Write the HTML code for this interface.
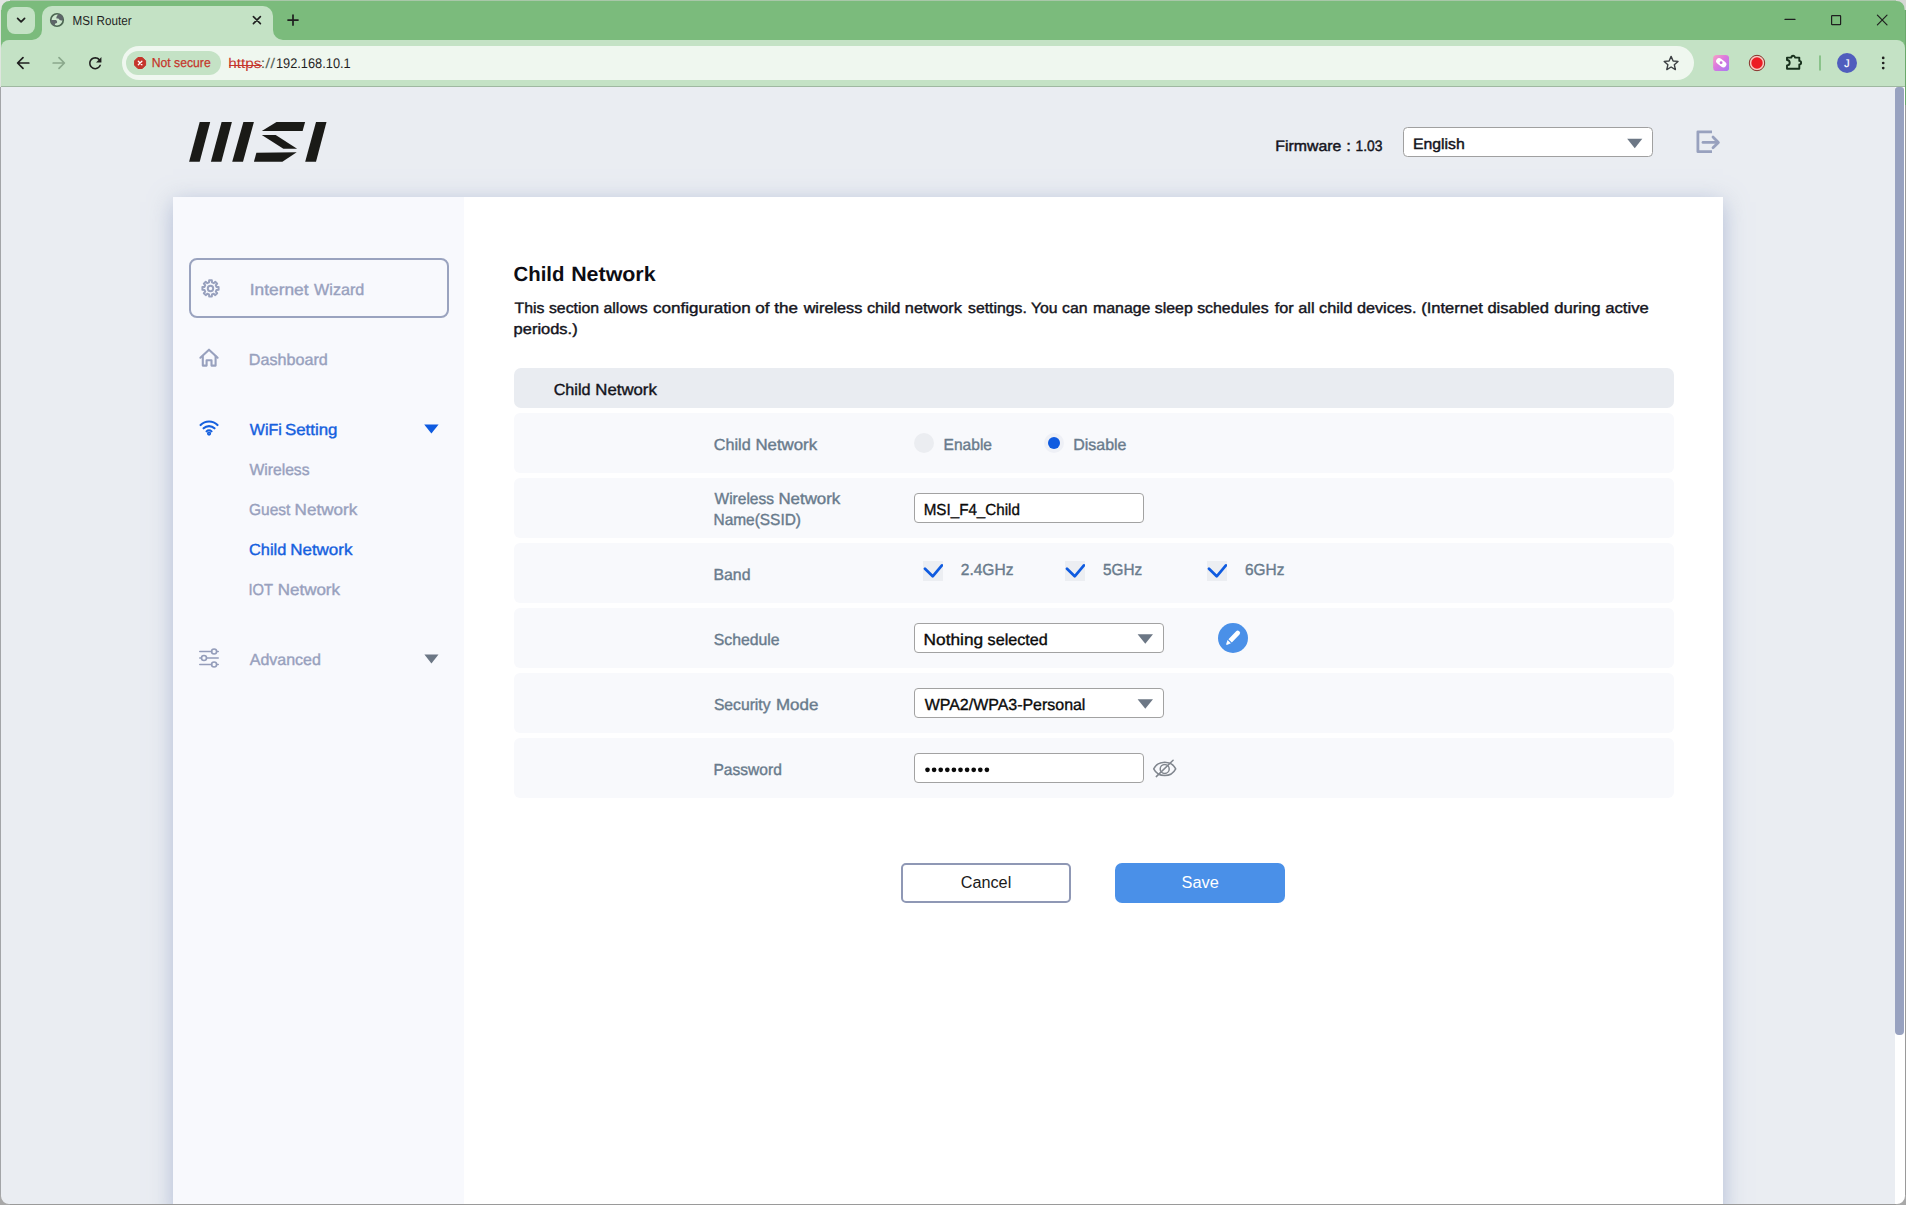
<!DOCTYPE html>
<html>
<head>
<meta charset="utf-8">
<title>MSI Router</title>
<style>
*{box-sizing:border-box;margin:0;padding:0}
html,body{width:1906px;height:1205px;overflow:hidden;background:#7bbb7c}
body{font-family:"Liberation Sans",sans-serif;position:relative;color:#111}
.abs{position:absolute}
.t{position:absolute;white-space:nowrap;line-height:1;transform-origin:0 50%;text-rendering:geometricPrecision}
/* ---------- browser chrome ---------- */
#tabstrip{left:0;top:0;width:1906px;height:40px;background:#7bbb7c}
#toolbar{left:1px;top:40px;width:1904px;height:46.3px;background:#c4e2c5;border-radius:8px 8px 0 0}
#tbline{left:1px;top:86.2px;width:1904px;height:1px;background:#9fb8a1}
#tab{left:42px;top:6px;width:231px;height:34px;background:#c4e2c5;border-radius:10px 10px 0 0}
#tabsearch{left:7px;top:6.5px;width:28px;height:27.5px;background:#c4e2c5;border-radius:8px}
#omni{left:122px;top:46px;width:1572px;height:34px;background:#eff7ef;border-radius:17px}
#chip{left:126px;top:51.2px;width:94.6px;height:23.8px;background:#c4e2c5;border-radius:12px}
/* ---------- page ---------- */
#page{left:1px;top:87px;width:1894px;height:1117px;background:#eaedf2;overflow:hidden}
#card{left:173px;top:197px;width:1550px;height:1020px;background:#fff;box-shadow:0 5px 22px 0 rgba(150,165,200,.68)}
#side{left:173px;top:197px;width:291px;height:1020px;background:#f8f9fd}
.nav{color:#969fbd}
.blue{color:#1759d6}
.lab{color:#6d7785}
.hdr{left:514px;top:368px;width:1160px;height:40px;background:#e9ecf1;border-radius:7px}
.row{left:514px;width:1160px;height:60px;background:#f8f9fc;border-radius:6px}
.inp{background:#fff;border:1px solid #a2a2a2;border-radius:4px}
</style>
</head>
<body>
<!-- BROWSER CHROME -->
<div class="abs" id="tabstrip"></div>
<div class="abs" id="toolbar"></div>
<div class="abs" id="tbline"></div>
<div class="abs" id="tab"></div>
<div class="abs" id="tabsearch"></div>
<div class="abs" id="omni"></div>
<div class="abs" id="chip"></div>
<!-- CHROME-ICONS -->
<!-- tab bottom curves -->
<svg class="abs" style="left:32px;top:30px" width="10" height="10" viewBox="0 0 10 10"><path d="M10 0 V10 H0 A10 10 0 0 0 10 0 Z" fill="#c4e2c5"/></svg>
<svg class="abs" style="left:273px;top:30px" width="10" height="10" viewBox="0 0 10 10"><path d="M0 0 V10 H10 A10 10 0 0 1 0 0 Z" fill="#c4e2c5"/></svg>
<svg class="abs" style="left:0;top:0" width="320" height="90" viewBox="0 0 320 90" fill="none" stroke="#1f1f1f" stroke-linecap="round" stroke-linejoin="round">
<path d="M17.6 18.4 L21.1 21.9 L24.6 18.4" stroke-width="1.7"/>
<path d="M253.4 16.6 L260.4 23.6 M260.4 16.6 L253.4 23.6" stroke-width="1.6"/>
<path d="M288 20.1 H298 M293 15.1 V25.1" stroke-width="1.7"/>
<path d="M28.8 63 H18 M23 57.6 L17.6 63 L23 68.4" stroke-width="1.7"/>
<path d="M53.2 63 H64 M59 57.6 L64.4 63 L59 68.4" stroke-width="1.7" stroke="#8aa88c"/>
</svg>
<svg class="abs" style="left:85.9px;top:53.8px" width="18.5" height="18.5" viewBox="0 0 24 24"><path fill="#1f1f1f" d="M17.65 6.35C16.2 4.9 14.21 4 12 4c-4.42 0-7.99 3.58-7.99 8s3.57 8 7.99 8c3.73 0 6.84-2.55 7.73-6h-2.08c-.82 2.33-3.04 4-5.65 4-3.31 0-6-2.69-6-6s2.69-6 6-6c1.66 0 3.14.69 4.22 1.78L13 11h7V4l-2.35 2.35z"/></svg>
<!-- globe favicon -->
<svg class="abs" style="left:49px;top:12px" width="16" height="16" viewBox="0 0 16 16"><circle cx="8" cy="8" r="6.25" fill="#cbe6cc" stroke="#4b6651" stroke-width="1.7"/><path d="M7.3 5.9 C7.5 4.4 8.5 3.3 9.4 2.3 C12.6 1.6 14.9 4.6 14.3 8.1 C13.4 8.7 11.2 8.5 10.4 7.7 C10 6.9 9.4 6.4 8.6 6.5 C8 6.6 7.4 6.5 7.3 5.9 Z" fill="#5d6568"/><path d="M1.6 8.3 C3 7.8 5.6 7.8 6.9 8.1 C7.8 8.6 8.3 9.6 8.1 10.4 C7.8 11.2 6.4 11 6 11.8 C5.8 12.4 6 13.1 5.5 13.9 C2.8 13 1.3 10.5 1.6 8.3 Z" fill="#5d6568"/></svg>
<!-- not secure icon -->
<svg class="abs" style="left:133px;top:56px" width="14" height="14" viewBox="0 0 14 14"><path d="M4.9 1.5 H9.3 L12.6 4.8 V9.2 L9.3 12.5 H4.9 L1.6 9.2 V4.8 Z" fill="#c5352b" stroke="#c5352b" stroke-width="1" stroke-linejoin="round"/><path d="M5.3 5.2 L8.9 8.8 M8.9 5.2 L5.3 8.8" stroke="#fff" stroke-width="1.25" stroke-linecap="round"/></svg>
<div class="abs" style="left:228.6px;top:64.6px;width:33.4px;height:1.2px;background:#c5352b"></div>
<!-- right side -->
<svg class="abs" style="left:1660px;top:0" width="246" height="90" viewBox="1660 0 246 90" fill="none" stroke="#1f1f1f" stroke-linecap="round" stroke-linejoin="round">
<path d="M1671.1 56.4 L1673.1 61 L1678 61.4 L1674.3 64.7 L1675.4 69.6 L1671.1 67 L1666.8 69.6 L1667.9 64.7 L1664.2 61.4 L1669.1 61 Z" stroke-width="1.4" stroke="#3c4043"/>
<path d="M1785 19.4 H1795" stroke-width="1.2"/>
<rect x="1831.6" y="15.6" width="9" height="9" stroke-width="1.2" rx="0.6"/>
<path d="M1877.4 15.2 L1887 24.8 M1887 15.2 L1877.4 24.8" stroke-width="1.2"/>
<path d="M1787 57.6 H1791.4 A1.8 1.8 0 0 1 1795 57.6 H1799.3 V60.9 A1.8 1.8 0 0 1 1799.3 64.5 V68.7 H1787 V65.4 C1790.6 65.2 1790.6 60.2 1787 60 Z" stroke-width="1.9" stroke="#17301c"/>
<path d="M1820 56 V70" stroke="#7bbb7b" stroke-width="1.6"/>
<circle cx="1883.2" cy="57.9" r="1.35" fill="#1f1f1f" stroke="none"/><circle cx="1883.2" cy="63" r="1.35" fill="#1f1f1f" stroke="none"/><circle cx="1883.2" cy="68.1" r="1.35" fill="#1f1f1f" stroke="none"/>
</svg>
<!-- pink ext -->
<svg class="abs" style="left:1713px;top:55px" width="16.4" height="16.2" viewBox="0 0 16 16"><defs><linearGradient id="pg" x1="0" y1="0" x2="1" y2="1"><stop offset="0" stop-color="#f7a2c4"/><stop offset="0.45" stop-color="#dc78de"/><stop offset="1" stop-color="#a57af2"/></linearGradient></defs><rect width="16" height="16" rx="3.6" fill="url(#pg)"/><path d="M6 6.1 L10.1 9.3" stroke="#fff" stroke-width="6" stroke-linecap="round"/><circle cx="7.9" cy="7.6" r="1.4" fill="#c672da"/></svg>
<!-- record -->
<svg class="abs" style="left:1748.3px;top:53.8px" width="18" height="18" viewBox="0 0 18 18"><circle cx="9" cy="9" r="7.7" fill="#f7cbc2" stroke="#86302a" stroke-width="1"/><circle cx="9" cy="9" r="5.7" fill="#ec1c24"/></svg>
<!-- avatar -->
<div class="abs" style="left:1836.7px;top:53px;width:20px;height:20px;border-radius:50%;background:#505dbd"></div>

<!-- PAGE -->
<div class="abs" id="page"></div>
<div class="abs" id="card"></div>
<div class="abs" id="side"></div>
<!-- HEADER -->
<svg class="abs" style="left:189px;top:122px" width="138" height="40" viewBox="189 122 138 40">
<g fill="#1a1a17">
<polygon points="199.7,122.1 210.2,122.1 199.7,161.8 189.1,161.8"/>
<polygon points="221.6,122.1 231.9,122.1 221.4,161.8 210.9,161.8"/>
<polygon points="243.4,122.1 253.9,122.1 243.0,161.8 232.2,161.8"/>
<polygon points="276.5,122.1 305.1,122.1 302.6,131.1 261.8,131.1"/>
<polygon points="261.8,135.1 275.7,135.1 297.1,148.7 283.4,148.7"/>
<polygon points="256.4,152.7 296.7,152.3 282.4,161.8 253.9,161.8"/>
<polygon points="316.0,122.1 326.5,122.1 316.0,161.8 305.2,161.8"/>
</g></svg>
<div class="abs inp" style="left:1403px;top:127px;width:250px;height:30px;border-color:#a0a0a0;border-radius:4.5px"></div>
<svg class="abs" style="left:1625.8px;top:137.6px" width="18" height="11" viewBox="0 0 18 11"><path d="M1.2 0.8 H16.3 L8.75 10.2 Z" fill="#6c7785"/></svg>
<svg class="abs" style="left:1690px;top:125px" width="36" height="34" viewBox="1690 125 36 34" fill="none" stroke="#98a1be" stroke-width="2.8" stroke-linejoin="round"><path d="M1712 131.8 H1697.9 V151.7 H1712"/><path d="M1703 142.4 H1717.5" stroke-linecap="round"/><path d="M1713 137 L1718.4 142.4 L1713 147.8" stroke-linecap="round"/></svg>

<!-- SIDEBAR -->
<div class="abs" style="left:189px;top:258px;width:260px;height:60px;border:2px solid #9aa3bf;border-radius:8px"></div>
<!-- gear -->
<svg class="abs" style="left:198px;top:276px" width="26" height="26" viewBox="198 276 26 26" fill="none" stroke="#98a1be" stroke-width="2" stroke-linejoin="round"><path d="M209.00 282.43 L209.15 280.36 L211.85 280.36 L212.00 282.43 L213.69 283.14 L215.26 281.77 L217.18 283.69 L215.81 285.26 L216.52 286.95 L218.59 287.10 L218.59 289.80 L216.52 289.95 L215.81 291.64 L217.18 293.21 L215.26 295.13 L213.69 293.76 L212.00 294.47 L211.85 296.54 L209.15 296.54 L209.00 294.47 L207.31 293.76 L205.74 295.13 L203.82 293.21 L205.19 291.64 L204.48 289.95 L202.41 289.80 L202.41 287.10 L204.48 286.95 L205.19 285.26 L203.82 283.69 L205.74 281.77 L207.31 283.14 Z"/><circle cx="210.5" cy="288.45" r="2.7"/></svg>
<!-- home -->
<svg class="abs" style="left:196px;top:345px" width="26" height="26" viewBox="196 345 26 26" fill="none" stroke="#98a1be" stroke-width="2.1" stroke-linejoin="round" stroke-linecap="round"><path d="M200.4 357.7 L209 349.7 L217.6 357.7"/><path d="M202.8 356.6 V365.6 H206.6 V360.3 H211.5 V365.6 H215.6 V356.6"/></svg>
<!-- wifi -->
<svg class="abs" style="left:196px;top:415.3px" width="26" height="24" viewBox="196 416 26 24" fill="none" stroke="#1560de" stroke-width="2.2" stroke-linecap="round"><path d="M200.6 426 A11.9 11.9 0 0 1 217.5 426"/><path d="M203.6 429.3 A7.7 7.7 0 0 1 214.5 429.3"/><path d="M206.5 432.4 A3.6 3.6 0 0 1 211.6 432.4" stroke-width="2"/><circle cx="209.05" cy="434.6" r="1.25" stroke-width="1.7"/></svg>
<svg class="abs" style="left:423px;top:424px" width="17" height="11" viewBox="0 0 17 11"><path d="M1.2 0.6 H15.6 L8.4 9.6 Z" fill="#0f5be0"/></svg>
<!-- sliders -->
<svg class="abs" style="left:197px;top:646px" width="24" height="24" viewBox="0 0 24 24" fill="none" stroke="#949dba" stroke-width="1.6" stroke-linecap="round"><path d="M2.8 5.45 H14.6 M2.8 12 H4.4 M9.6 12 H21.2 M2.8 18.55 H14.6"/><circle cx="17.1" cy="5.45" r="2.5"/><circle cx="7" cy="12" r="2.5"/><circle cx="17.1" cy="18.55" r="2.5"/><path d="M19.8 5.45 H21.2 M19.8 18.55 H21.2"/></svg>
<svg class="abs" style="left:423px;top:654px" width="17" height="11" viewBox="0 0 17 11"><path d="M1.4 0.4 H15.5 L8.45 9.4 Z" fill="#6c7785"/></svg>

<!-- MAIN -->
<div class="abs hdr"></div>
<div class="abs row" style="top:413px"></div>
<div class="abs row" style="top:478px"></div>
<div class="abs row" style="top:543px"></div>
<div class="abs row" style="top:608px"></div>
<div class="abs row" style="top:673px"></div>
<div class="abs row" style="top:738px"></div>
<!-- radios -->
<div class="abs" style="left:914px;top:433px;width:20px;height:20px;border-radius:50%;background:#ebedf1"></div>
<div class="abs" style="left:1044px;top:433px;width:20px;height:20px;border-radius:50%;background:#eef0f6"></div>
<div class="abs" style="left:1048px;top:437px;width:12px;height:12px;border-radius:50%;background:#0f5be0"></div>
<!-- ssid input -->
<div class="abs inp" style="left:914px;top:493px;width:230px;height:30px"></div>
<!-- checkboxes -->
<div class="abs" style="left:923px;top:561px;width:20px;height:20px;background:#eceef2"></div>
<div class="abs" style="left:1065px;top:561px;width:20px;height:20px;background:#eceef2"></div>
<div class="abs" style="left:1207px;top:561px;width:20px;height:20px;background:#eceef2"></div>
<svg class="abs" style="left:923px;top:561px" width="20" height="20" viewBox="0 0 20 20"><path d="M2 7.7 L9.7 15.3 L18.9 4.4" fill="none" stroke="#0f5be0" stroke-width="2.7" stroke-linecap="round" stroke-linejoin="round"/></svg>
<svg class="abs" style="left:1065px;top:561px" width="20" height="20" viewBox="0 0 20 20"><path d="M2 7.7 L9.7 15.3 L18.9 4.4" fill="none" stroke="#0f5be0" stroke-width="2.7" stroke-linecap="round" stroke-linejoin="round"/></svg>
<svg class="abs" style="left:1207px;top:561px" width="20" height="20" viewBox="0 0 20 20"><path d="M2 7.7 L9.7 15.3 L18.9 4.4" fill="none" stroke="#0f5be0" stroke-width="2.7" stroke-linecap="round" stroke-linejoin="round"/></svg>
<!-- schedule select -->
<div class="abs inp" style="left:914px;top:623px;width:250px;height:30px"></div>
<svg class="abs" style="left:1136px;top:633px" width="18" height="11" viewBox="0 0 18 11"><path d="M1.6 1.2 H17 L9.3 10.8 Z" fill="#6c7785"/></svg>
<div class="abs" style="left:1218px;top:623px;width:30.2px;height:30.2px;border-radius:50%;background:#4a90e8"></div>
<svg class="abs" style="left:1218px;top:623px" width="31" height="31" viewBox="0 0 31 31"><g transform="translate(14.7 15.1) rotate(44)" fill="#fff"><path d="M-2.35 3.7 V-7.4 A2.35 2.1 0 0 1 2.35 -7.4 V3.7 Z"/><path d="M-2.35 5 H2.35 L0.5 9 H-0.5 Z"/></g></svg>
<!-- security select -->
<div class="abs inp" style="left:914px;top:688px;width:250px;height:30px"></div>
<svg class="abs" style="left:1136px;top:698px" width="18" height="11" viewBox="0 0 18 11"><path d="M1.6 1.2 H17 L9.3 10.8 Z" fill="#6c7785"/></svg>
<!-- password -->
<div class="abs inp" style="left:914px;top:753px;width:230px;height:30px"></div>
<svg class="abs" style="left:924px;top:766px" width="70" height="8" viewBox="0 0 70 8" fill="#0a0a0a"><circle cx="3.5" cy="3.8" r="2.35"/><circle cx="10.1" cy="3.8" r="2.35"/><circle cx="16.7" cy="3.8" r="2.35"/><circle cx="23.3" cy="3.8" r="2.35"/><circle cx="29.9" cy="3.8" r="2.35"/><circle cx="36.5" cy="3.8" r="2.35"/><circle cx="43.1" cy="3.8" r="2.35"/><circle cx="49.7" cy="3.8" r="2.35"/><circle cx="56.3" cy="3.8" r="2.35"/><circle cx="62.9" cy="3.8" r="2.35"/></svg>
<svg class="abs" style="left:1151px;top:757px" width="28" height="24" viewBox="1151 757 28 24" fill="none" stroke="#80868e" stroke-width="1.5" stroke-linecap="round"><path d="M1153.7 768.9 C1158.2 760 1171.2 760 1175.7 768.9 C1171.2 777.8 1158.2 777.8 1153.7 768.9 Z" stroke-linejoin="round"/><circle cx="1164.7" cy="768.9" r="4.5"/><path d="M1156.3 776.6 L1173.1 760.2"/></svg>
<!-- buttons -->
<div class="abs" style="left:901px;top:863px;width:170px;height:40px;background:#fff;border:2px solid #8f98b5;border-radius:5px"></div>
<div class="abs" style="left:1115px;top:863px;width:170px;height:40px;background:#4a90e8;border-radius:7px"></div>

<!-- SCROLLBAR -->
<div class="abs" style="left:1895px;top:87px;width:10px;height:1117px;background:#fff"></div>
<div class="abs" style="left:1895px;top:87.4px;width:9.3px;height:948px;background:#98a2c0;border-radius:3px 3px 4px 4px"></div>
<!-- window frame -->
<div class="abs" style="left:0;top:0;width:1px;height:87px;background:#dfe6df"></div>
<div class="abs" style="left:0;top:87px;width:1px;height:1118px;background:#a3a5a8"></div>
<div class="abs" style="left:1904.7px;top:0;width:1.3px;height:105px;background:#6aa86b"></div>
<div class="abs" style="left:1904.8px;top:105px;width:1.2px;height:1100px;background:#9a9a9a"></div>
<div class="abs" style="left:0;top:1203.8px;width:1906px;height:1.2px;background:#9a9a9a"></div>
<div class="abs" style="left:0;top:0;width:1906px;height:1px;background:#a9c7a9"></div>
<svg class="abs" style="left:0;top:0" width="10" height="10" viewBox="0 0 10 10"><path d="M0 0 H10 V1 A8 8 0 0 0 1.4 9.5 V10 H0 Z" fill="#e4e6e4"/></svg>
<svg class="abs" style="left:1896px;top:0" width="10" height="10" viewBox="0 0 10 10"><path d="M10 0 H0 V1 A8 8 0 0 1 8.6 9.5 V10 H10 Z" fill="#d5d8d5"/></svg>
<svg class="abs" style="left:0;top:1195px" width="10" height="10" viewBox="0 0 10 10"><path d="M0 10 H10 V9 A8 8 0 0 1 1 1 V0 H0 Z" fill="#a8a8a8"/></svg>
<svg class="abs" style="left:1896px;top:1195px" width="10" height="10" viewBox="0 0 10 10"><path d="M10 10 H0 V9 A8 8 0 0 0 9 1 V0 H10 Z" fill="#a8a8a8"/></svg>

<span class="t" style="left:72px;top:14px;font-size:13px;color:#1f1f1f;font-weight:400;transform:translate(0.58px,0.12px) scaleX(0.8974)">MSI Router</span>
<span class="t" style="left:151px;top:55px;font-size:13px;color:#c5352b;font-weight:400;-webkit-text-stroke:0.25px #c5352b;transform:translate(0.72px,0.78px) scaleX(0.9385)">Not secure</span>
<span class="t" style="left:228px;top:56px;font-size:14px;color:#c5352b;font-weight:400;transform:translate(0.34px,0.05px) scaleX(1.0929)">https</span>
<span class="t" style="left:260px;top:56px;font-size:14px;color:#5f6b60;font-weight:400;transform:translate(0.41px,0.05px) scaleX(1.2628)">://</span>
<span class="t" style="left:275px;top:56px;font-size:14px;color:#1f1f1f;font-weight:400;transform:translate(0.97px,0.05px) scaleX(0.9137)">192.168.10.1</span>
<span class="t" style="left:1844px;top:58px;font-size:11px;color:#ffffff;font-weight:400;-webkit-text-stroke:0.2px #ffffff;transform:translate(0.37px,0.97px) scaleX(0.9681)">J</span>
<span class="t" style="left:1275px;top:138px;font-size:15px;color:#14141c;font-weight:400;-webkit-text-stroke:0.45px #14141c;transform:translate(0.37px,0.80px) scaleX(1.0571)">Firmware</span>
<span class="t" style="left:1346px;top:138px;font-size:15px;color:#14141c;font-weight:400;-webkit-text-stroke:0.45px #14141c;transform:translate(0.17px,0.80px) scaleX(1.1178)">:</span>
<span class="t" style="left:1355px;top:138px;font-size:15px;color:#14141c;font-weight:400;-webkit-text-stroke:0.45px #14141c;transform:translate(0.46px,0.80px) scaleX(0.9221)">1.03</span>
<span class="t" style="left:1412px;top:136px;font-size:15px;color:#14141c;font-weight:400;-webkit-text-stroke:0.45px #14141c;transform:translate(0.97px,0.80px) scaleX(1.0523)">English</span>
<span class="t" style="left:249px;top:282px;font-size:16px;color:#98a1be;font-weight:400;-webkit-text-stroke:0.4px #98a1be;transform:translate(0.78px,0.78px) scaleX(1.0826)">Internet</span>
<span class="t" style="left:314px;top:282px;font-size:16px;color:#98a1be;font-weight:400;-webkit-text-stroke:0.4px #98a1be;transform:translate(0.12px,0.78px) scaleX(1.0067)">Wizard</span>
<span class="t" style="left:248px;top:352px;font-size:16px;color:#98a1be;font-weight:400;-webkit-text-stroke:0.4px #98a1be;transform:translate(0.77px,0.78px) scaleX(1.0088)">Dashboard</span>
<span class="t" style="left:249px;top:422px;font-size:16px;color:#1560de;font-weight:400;-webkit-text-stroke:0.4px #1560de;transform:translate(0.82px,0.78px) scaleX(0.9980)">WiFi</span>
<span class="t" style="left:284px;top:422px;font-size:16px;color:#1560de;font-weight:400;-webkit-text-stroke:0.4px #1560de;transform:translate(0.94px,0.78px) scaleX(1.0537)">Setting</span>
<span class="t" style="left:249px;top:462px;font-size:16px;color:#98a1be;font-weight:400;-webkit-text-stroke:0.4px #98a1be;transform:translate(0.42px,0.78px) scaleX(0.9802)">Wireless</span>
<span class="t" style="left:249px;top:502px;font-size:16px;color:#98a1be;font-weight:400;-webkit-text-stroke:0.4px #98a1be;transform:translate(0.01px,0.78px) scaleX(0.9700)">Guest</span>
<span class="t" style="left:294px;top:502px;font-size:16px;color:#98a1be;font-weight:400;-webkit-text-stroke:0.4px #98a1be;transform:translate(0.61px,0.78px) scaleX(1.0664)">Network</span>
<span class="t" style="left:248px;top:542px;font-size:16px;color:#1560de;font-weight:400;-webkit-text-stroke:0.4px #1560de;transform:translate(0.98px,0.78px) scaleX(1.0217)">Child</span>
<span class="t" style="left:290px;top:542px;font-size:16px;color:#1560de;font-weight:400;-webkit-text-stroke:0.4px #1560de;transform:translate(0.22px,0.78px) scaleX(1.0596)">Network</span>
<span class="t" style="left:248px;top:582px;font-size:16px;color:#98a1be;font-weight:400;-webkit-text-stroke:0.4px #98a1be;transform:translate(0.39px,0.78px) scaleX(0.9223)">IOT</span>
<span class="t" style="left:277px;top:582px;font-size:16px;color:#98a1be;font-weight:400;-webkit-text-stroke:0.4px #98a1be;transform:translate(0.82px,0.78px) scaleX(1.0596)">Network</span>
<span class="t" style="left:249px;top:652px;font-size:16px;color:#98a1be;font-weight:400;-webkit-text-stroke:0.4px #98a1be;transform:translate(0.72px,0.78px) scaleX(1.0005)">Advanced</span>
<span class="t" style="left:513px;top:265px;font-size:20.6px;color:#0d0d14;font-weight:700;transform:translate(0.58px,0.00px) scaleX(0.9880)">Child</span>
<span class="t" style="left:571px;top:265px;font-size:20.6px;color:#0d0d14;font-weight:700;transform:translate(0.13px,0.00px) scaleX(1.0398)">Network</span>
<span class="t" style="left:514px;top:300px;font-size:15px;color:#14141c;font-weight:400;-webkit-text-stroke:0.4px #14141c;transform:translate(0.57px,0.80px) scaleX(1.0566)">This section allows</span>
<span class="t" style="left:653px;top:300px;font-size:15px;color:#14141c;font-weight:400;-webkit-text-stroke:0.4px #14141c;transform:translate(0.03px,0.80px) scaleX(1.1361)">configuration of the</span>
<span class="t" style="left:803px;top:300px;font-size:15px;color:#14141c;font-weight:400;-webkit-text-stroke:0.4px #14141c;transform:translate(0.63px,0.80px) scaleX(1.0841)">wireless child network</span>
<span class="t" style="left:968px;top:300px;font-size:15px;color:#14141c;font-weight:400;-webkit-text-stroke:0.4px #14141c;transform:translate(0.04px,0.80px) scaleX(1.0533)">settings. You can</span>
<span class="t" style="left:1092px;top:300px;font-size:15px;color:#14141c;font-weight:400;-webkit-text-stroke:0.4px #14141c;transform:translate(0.99px,0.80px) scaleX(1.0585)">manage sleep schedules</span>
<span class="t" style="left:1274px;top:300px;font-size:15px;color:#14141c;font-weight:400;-webkit-text-stroke:0.4px #14141c;transform:translate(0.83px,0.80px) scaleX(1.0822)">for all child devices.</span>
<span class="t" style="left:1421px;top:300px;font-size:15px;color:#14141c;font-weight:400;-webkit-text-stroke:0.4px #14141c;transform:translate(0.19px,0.80px) scaleX(1.1029)">(Internet disabled</span>
<span class="t" style="left:1554px;top:300px;font-size:15px;color:#14141c;font-weight:400;-webkit-text-stroke:0.4px #14141c;transform:translate(0.25px,0.80px) scaleX(1.1114)">during active</span>
<span class="t" style="left:513px;top:321px;font-size:15px;color:#14141c;font-weight:400;-webkit-text-stroke:0.4px #14141c;transform:translate(0.60px,0.80px) scaleX(1.0978)">periods.)</span>
<span class="t" style="left:553px;top:382px;font-size:16px;color:#14141c;font-weight:400;-webkit-text-stroke:0.4px #14141c;transform:translate(0.69px,0.78px) scaleX(1.0103)">Child</span>
<span class="t" style="left:595px;top:382px;font-size:16px;color:#14141c;font-weight:400;-webkit-text-stroke:0.4px #14141c;transform:translate(0.33px,0.78px) scaleX(1.0475)">Network</span>
<span class="t" style="left:713px;top:437px;font-size:16px;color:#697b8c;font-weight:400;-webkit-text-stroke:0.4px #697b8c;transform:translate(0.79px,0.78px) scaleX(1.0103)">Child</span>
<span class="t" style="left:755px;top:437px;font-size:16px;color:#697b8c;font-weight:400;-webkit-text-stroke:0.4px #697b8c;transform:translate(0.43px,0.78px) scaleX(1.0510)">Network</span>
<span class="t" style="left:714px;top:491px;font-size:16px;color:#697b8c;font-weight:400;-webkit-text-stroke:0.4px #697b8c;transform:translate(0.52px,0.78px) scaleX(0.9688)">Wireless</span>
<span class="t" style="left:778px;top:491px;font-size:16px;color:#697b8c;font-weight:400;-webkit-text-stroke:0.4px #697b8c;transform:translate(0.42px,0.78px) scaleX(1.0544)">Network</span>
<span class="t" style="left:713px;top:512px;font-size:16px;color:#697b8c;font-weight:400;-webkit-text-stroke:0.4px #697b8c;transform:translate(0.51px,0.78px) scaleX(0.9647)">Name(SSID)</span>
<span class="t" style="left:713px;top:567px;font-size:16px;color:#697b8c;font-weight:400;-webkit-text-stroke:0.4px #697b8c;transform:translate(0.48px,0.78px) scaleX(0.9910)">Band</span>
<span class="t" style="left:713px;top:632px;font-size:16px;color:#697b8c;font-weight:400;-webkit-text-stroke:0.4px #697b8c;transform:translate(0.78px,0.78px) scaleX(0.9869)">Schedule</span>
<span class="t" style="left:713px;top:697px;font-size:16px;color:#697b8c;font-weight:400;-webkit-text-stroke:0.4px #697b8c;transform:translate(0.89px,0.78px) scaleX(0.9800)">Security</span>
<span class="t" style="left:776px;top:697px;font-size:16px;color:#697b8c;font-weight:400;-webkit-text-stroke:0.4px #697b8c;transform:translate(0.02px,0.78px) scaleX(1.0579)">Mode</span>
<span class="t" style="left:713px;top:762px;font-size:16px;color:#697b8c;font-weight:400;-webkit-text-stroke:0.4px #697b8c;transform:translate(0.50px,0.78px) scaleX(0.9720)">Password</span>
<span class="t" style="left:943px;top:437px;font-size:16px;color:#697b8c;font-weight:400;-webkit-text-stroke:0.4px #697b8c;transform:translate(0.60px,0.78px) scaleX(0.9717)">Enable</span>
<span class="t" style="left:1073px;top:437px;font-size:16px;color:#697b8c;font-weight:400;-webkit-text-stroke:0.4px #697b8c;transform:translate(0.28px,0.78px) scaleX(0.9963)">Disable</span>
<span class="t" style="left:923px;top:502px;font-size:16px;color:#0a0a0a;font-weight:400;-webkit-text-stroke:0.35px #0a0a0a;transform:translate(0.72px,0.78px) scaleX(0.9489)">MSI_F4_Child</span>
<span class="t" style="left:960px;top:562px;font-size:16px;color:#697b8c;font-weight:400;-webkit-text-stroke:0.4px #697b8c;transform:translate(0.74px,0.78px) scaleX(0.9708)">2.4GHz</span>
<span class="t" style="left:1103px;top:562px;font-size:16px;color:#697b8c;font-weight:400;-webkit-text-stroke:0.4px #697b8c;transform:translate(0.02px,0.78px) scaleX(0.9567)">5GHz</span>
<span class="t" style="left:1245px;top:562px;font-size:16px;color:#697b8c;font-weight:400;-webkit-text-stroke:0.4px #697b8c;transform:translate(0.02px,0.78px) scaleX(0.9618)">6GHz</span>
<span class="t" style="left:923px;top:632px;font-size:16px;color:#0a0a0a;font-weight:400;-webkit-text-stroke:0.35px #0a0a0a;transform:translate(0.60px,0.78px) scaleX(1.0795)">Nothing</span>
<span class="t" style="left:987px;top:632px;font-size:16px;color:#0a0a0a;font-weight:400;-webkit-text-stroke:0.35px #0a0a0a;transform:translate(0.62px,0.78px) scaleX(1.0100)">selected</span>
<span class="t" style="left:924px;top:697px;font-size:16px;color:#0a0a0a;font-weight:400;-webkit-text-stroke:0.35px #0a0a0a;transform:translate(0.72px,0.78px) scaleX(0.9966)">WPA2/WPA3-Personal</span>
<span class="t" style="left:960px;top:875px;font-size:16px;color:#1a1a1a;font-weight:400;text-rendering:auto;transform:translate(0.70px,0.18px) scaleX(1.0150)">Cancel</span>
<span class="t" style="left:1181px;top:875px;font-size:16px;color:#ffffff;font-weight:400;text-rendering:auto;transform:translate(0.53px,0.18px) scaleX(1.0210)">Save</span>

</body>
</html>
